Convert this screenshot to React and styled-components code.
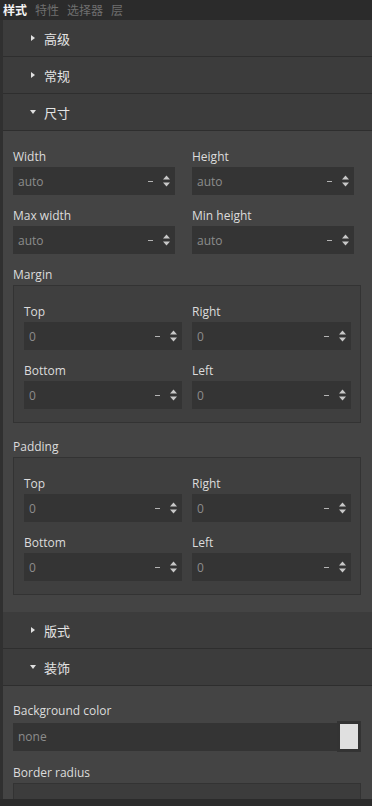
import React from 'react';
import styled, { createGlobalStyle } from 'styled-components';

const GlobalStyle = createGlobalStyle`
  body {
    margin: 0;
    background: #2d2d2d;
    font-family: "Open Sans", "Noto Sans CJK SC", sans-serif;
    overflow: hidden;
  }
`;

const Shell = styled.div`
  height: 100vh;
  display: flex;
  flex-direction: column;
`;

const TabBar = styled.div`
  height: 20px;
  flex: none;
  display: flex;
  align-items: center;
  gap: 8px;
  padding-left: 3px;
  background: #2b2b2b;
  font-family: "Noto Sans CJK SC", sans-serif;
  font-size: 12px;
`;

const Tab = styled.span`
  color: ${p => (p.active ? '#f2f2f2' : '#6f6f6f')};
  font-weight: ${p => (p.active ? 700 : 400)};
  line-height: 20px;
`;

const Panel = styled.div`
  flex: 1;
  overflow: hidden;
  border-left: 3px solid #303030;
  background: #444444;
`;

const Header = styled.div`
  height: 36px;
  display: flex;
  align-items: center;
  padding-left: 26px;
  background: #3c3c3c;
  border-bottom: 1px solid #2e2e2e;
  color: #e4e4e4;
  font-family: "Noto Sans CJK SC", sans-serif;
  font-size: 13px;
`;

const Caret = styled.span`
  width: 7px;
  display: flex;
  justify-content: center;
  margin-right: 8px;
  &::before {
    content: '';
    border-style: solid;
    border-color: transparent;
    ${p =>
      p.open
        ? 'border-width: 4px 3.5px 0 3.5px; border-top-color: #e0e0e0;'
        : 'border-width: 3.5px 0 3.5px 4px; border-left-color: #e0e0e0;'}
  }
`;

const Body = styled.div`
  padding: ${p => p.top || 17}px 0 17px 10px;
  display: flex;
  flex-direction: column;
`;

const Grid = styled.div`
  display: grid;
  grid-template-columns: ${p => p.cols};
  column-gap: ${p => p.gap}px;
  row-gap: 12px;
`;

const Field = styled.div`
  display: flex;
  flex-direction: column;
`;

const Label = styled.div`
  color: #dcdcdc;
  font-size: 12px;
  line-height: 18px;
  margin-bottom: 1px;
`;

const GroupLabel = styled(Label)`
  margin-top: ${p => p.top || 12}px;
`;

const InputBox = styled.div`
  height: 28px;
  display: flex;
  align-items: center;
  padding-left: 5px;
  padding-right: 5px;
  background: #343434;
  color: #8c8c8c;
  font-size: 12px;
`;

const Value = styled.span`
  flex: 1;
`;

const Dash = styled.span`
  width: 5px;
  height: 1px;
  background: #b4b4b4;
  margin-right: 10px;
`;

const Spinner = styled.svg`
  width: 7px;
  height: 12px;
  flex: none;
`;

const Group = styled.div`
  width: 348px;
  box-sizing: border-box;
  border: 1px solid #333333;
  background: #3f3f3f;
  padding: 17px 10px 13px 10px;
`;

const ColorRow = styled.div`
  display: flex;
  align-items: center;
  width: 348px;
`;

const ColorInput = styled(InputBox)`
  flex: 1;
`;

const Swatch = styled.div`
  width: 18px;
  height: 25px;
  flex: none;
  background: #e0e0e0;
  border: 3px solid #333333;
`;

const EmptyBox = styled.div`
  width: 348px;
  height: 30px;
  box-sizing: border-box;
  border: 1px solid #333333;
  background: #3c3c3c;
`;

const BottomBar = styled.div`
  height: 7px;
  flex: none;
  background: #2b2b2b;
`;

function Input({ value }) {
  return (
    <InputBox>
      <Value>{value}</Value>
      <Dash />
      <Spinner viewBox="0 0 7 12">
        <path d="M3.5 0.5 L7 4.5 H0 Z" fill="#c8c8c8" />
        <path d="M0 7.5 H7 L3.5 11.5 Z" fill="#c8c8c8" />
      </Spinner>
    </InputBox>
  );
}

function NumField({ label, value }) {
  return (
    <Field>
      <Label>{label}</Label>
      <Input value={value} />
    </Field>
  );
}

function SectionHeader({ title, open }) {
  return (
    <Header>
      <Caret open={open} />
      {title}
    </Header>
  );
}

function BoxGroup({ label, top }) {
  return (
    <>
      <GroupLabel top={top}>{label}</GroupLabel>
      <Group>
        <Grid cols="158px 159px" gap={10}>
          <NumField label="Top" value="0" />
          <NumField label="Right" value="0" />
          <NumField label="Bottom" value="0" />
          <NumField label="Left" value="0" />
        </Grid>
      </Group>
    </>
  );
}

export default function App() {
  return (
    <Shell>
      <GlobalStyle />
      <TabBar>
        <Tab active>样式</Tab>
        <Tab>特性</Tab>
        <Tab>选择器</Tab>
        <Tab>层</Tab>
      </TabBar>
      <Panel>
        <SectionHeader title="高级" />
        <SectionHeader title="常规" />
        <SectionHeader title="尺寸" open />
        <Body>
          <Grid cols="162px 162px" gap={17}>
            <NumField label="Width" value="auto" />
            <NumField label="Height" value="auto" />
            <NumField label="Max width" value="auto" />
            <NumField label="Min height" value="auto" />
          </Grid>
          <BoxGroup label="Margin" top={12} />
          <BoxGroup label="Padding" top={15} />
        </Body>
        <SectionHeader title="版式" />
        <SectionHeader title="装饰" open />
        <Body top={16}>
          <Field>
            <Label>Background color</Label>
            <ColorRow>
              <ColorInput>none</ColorInput>
              <Swatch />
            </ColorRow>
          </Field>
          <GroupLabel>Border radius</GroupLabel>
          <EmptyBox />
        </Body>
      </Panel>
      <BottomBar />
    </Shell>
  );
}
